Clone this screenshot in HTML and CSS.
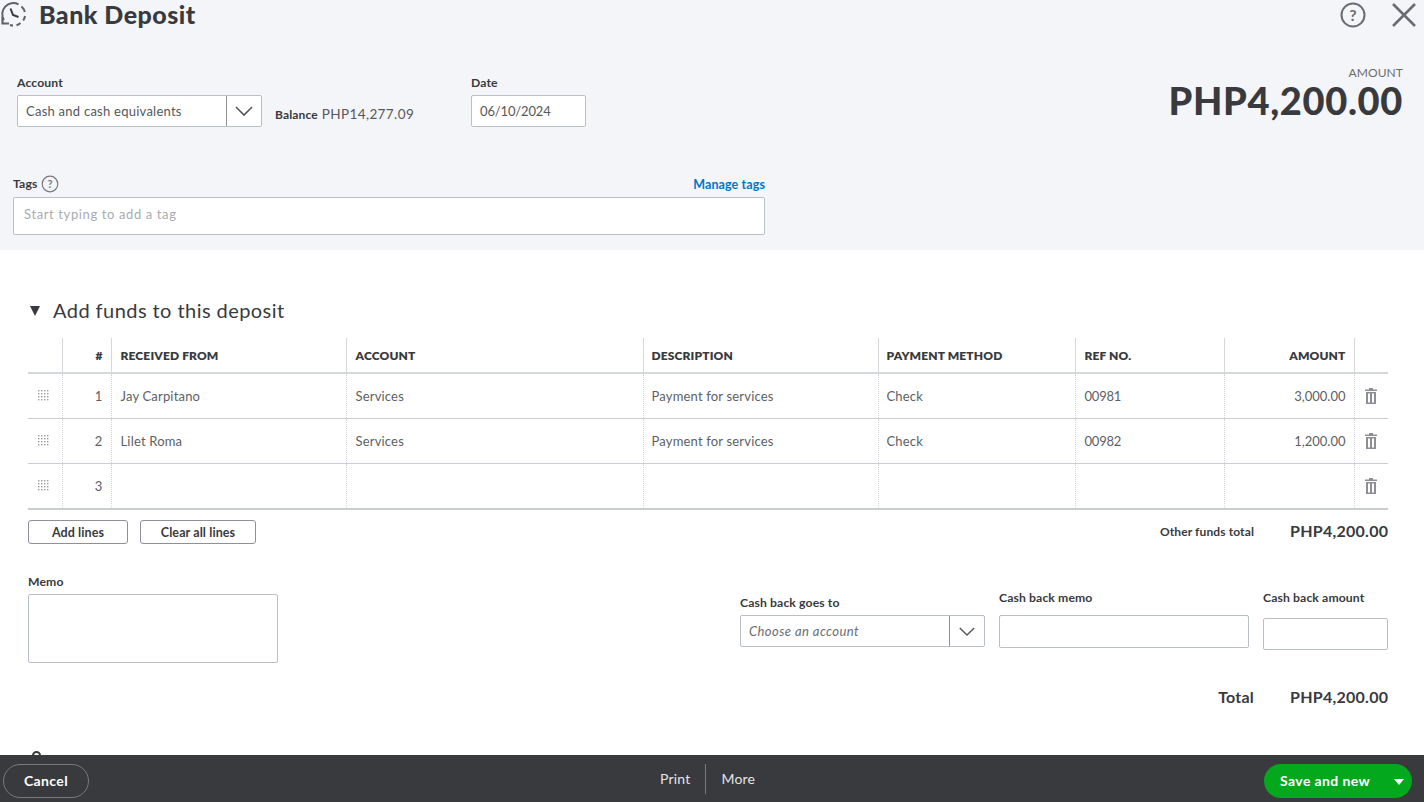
FILE: index.html
```html
<!DOCTYPE html>
<html lang="en">
<head>
<meta charset="utf-8">
<title>Bank Deposit</title>
<link rel="stylesheet" href="styles.css">
</head>
<body>
<div class="page">
  <header class="top">
    <div class="title-row">
      <svg class="history" viewBox="0 0 28 28" width="28" height="28" fill="none" stroke="#5f6268" stroke-width="2">
        <path d="M4 19 A11 11 0 0 1 18.5 3.4"/>
        <path d="M21.5 5.4 A11 11 0 0 1 24.8 11 M25 15 A11 11 0 0 1 23.2 19.5 M20.5 22 A11 11 0 0 1 16.5 24.2 M13 24.6 A11 11 0 0 1 10 24"/>
        <path d="M2.5 16 V22.5 H9" stroke-width="2.2"/>
        <path d="M10.5 7.5 L13 14 L18.5 16" stroke="#393a3d"/>
      </svg>
      <h1 class="title">Bank Deposit</h1>
      <div class="top-icons">
        <svg viewBox="0 0 26 26" width="26" height="26" fill="none" stroke="#6b6c72" stroke-width="2"><circle cx="13" cy="13" r="11.5"/><text x="13" y="18.5" class="q-big">?</text></svg>
        <svg viewBox="0 0 24 24" width="24" height="24" fill="none" stroke="#6b6c72" stroke-width="2.6"><path d="M1 1 L23 23 M23 1 L1 23"/></svg>
      </div>
    </div>
    <div class="fields-row">
      <div class="field">
        <label class="label">Account</label>
        <div class="select account-select">
          <span class="select-text">Cash and cash equivalents</span>
          <span class="select-btn"><svg viewBox="0 0 20 12" width="20" height="12" fill="none" stroke="#55575c" stroke-width="1.6"><path d="M2 2 L10 10 L18 2"/></svg></span>
        </div>
      </div>
      <div class="balance"><b>Balance</b> PHP14,277.09</div>
      <div class="field date-field">
        <label class="label">Date</label>
        <div class="input date-input">06/10/2024</div>
      </div>
      <div class="amount-box">
        <div class="amount-label">AMOUNT</div>
        <div class="amount-value">PHP4,200.00</div>
      </div>
    </div>
    <div class="tags">
      <div class="tags-head">
        <span class="label tags-label">Tags</span>
        <svg viewBox="0 0 18 18" width="18" height="18" fill="none" stroke="#77797e" stroke-width="1.2"><circle cx="9" cy="9" r="7.8"/><text x="9" y="13" class="q-small">?</text></svg>
        <a class="manage">Manage tags</a>
      </div>
      <div class="tags-input">Start typing to add a tag</div>
    </div>
  </header>

  <main class="content">
    <h2 class="section"><span class="caret"></span>Add funds to this deposit</h2>
    <table class="lines">
      <colgroup>
        <col class="c-drag"><col class="c-num"><col class="c-from"><col class="c-acct"><col class="c-desc"><col class="c-pay"><col class="c-ref"><col class="c-amt"><col class="c-del">
      </colgroup>
      <thead>
        <tr><th></th><th class="r">#</th><th>RECEIVED FROM</th><th>ACCOUNT</th><th>DESCRIPTION</th><th>PAYMENT METHOD</th><th>REF NO.</th><th class="r">AMOUNT</th><th></th></tr>
      </thead>
      <tbody>
        <tr>
          <td class="drag"><svg viewBox="0 0 11 11" width="11" height="11"><use href="#grip"/></svg></td>
          <td class="r">1</td><td>Jay Carpitano</td><td>Services</td><td>Payment for services</td><td>Check</td><td class="num">00981</td><td class="r amt">3,000.00</td>
          <td class="del"><svg viewBox="0 0 12 16" width="12" height="16"><use href="#trash"/></svg></td>
        </tr>
        <tr>
          <td class="drag"><svg viewBox="0 0 11 11" width="11" height="11"><use href="#grip"/></svg></td>
          <td class="r">2</td><td>Lilet Roma</td><td>Services</td><td>Payment for services</td><td>Check</td><td class="num">00982</td><td class="r amt">1,200.00</td>
          <td class="del"><svg viewBox="0 0 12 16" width="12" height="16"><use href="#trash"/></svg></td>
        </tr>
        <tr>
          <td class="drag"><svg viewBox="0 0 11 11" width="11" height="11"><use href="#grip"/></svg></td>
          <td class="r">3</td><td></td><td></td><td></td><td></td><td></td><td></td>
          <td class="del"><svg viewBox="0 0 12 16" width="12" height="16"><use href="#trash"/></svg></td>
        </tr>
      </tbody>
    </table>
    <div class="actions">
      <button class="btn btn-add">Add lines</button>
      <button class="btn btn-clear">Clear all lines</button>
      <span class="sub-label">Other funds total</span>
      <span class="sub-value">PHP4,200.00</span>
    </div>
    <div class="lower">
      <div class="memo">
        <label class="label">Memo</label>
        <div class="memo-box"></div>
      </div>
      <div class="cash-goes">
        <label class="label">Cash back goes to</label>
        <div class="select cash-select">
          <span class="select-text placeholder">Choose an account</span>
          <span class="select-btn"><svg viewBox="0 0 20 12" width="18" height="11" fill="none" stroke="#55575c" stroke-width="1.6"><path d="M2 2 L10 10 L18 2"/></svg></span>
        </div>
      </div>
      <div class="cash-memo">
        <label class="label">Cash back memo</label>
        <div class="input cash-memo-input"></div>
      </div>
      <div class="cash-amount">
        <label class="label">Cash back amount</label>
        <div class="input cash-amount-input"></div>
      </div>
    </div>
    <div class="total-row">
      <span class="total-label">Total</span>
      <span class="sub-value">PHP4,200.00</span>
    </div>
    <div class="attach-pin"></div>
  </main>

  <footer class="footer">
    <button class="cancel">Cancel</button>
    <div class="foot-mid">
      <span class="foot-link print">Print</span>
      <span class="foot-link more">More</span>
    </div>
    <button class="save"><span>Save and new</span><i class="save-caret"></i></button>
  </footer>
</div>
<svg class="defs" width="0" height="0">
  <defs>
    <g id="grip" fill="#9a9ca1">
      <rect x="0" y="0" width="1.4" height="1.4"/><rect x="3" y="0" width="1.4" height="1.4"/><rect x="6" y="0" width="1.4" height="1.4"/><rect x="9" y="0" width="1.4" height="1.4"/>
      <rect x="0" y="3" width="1.4" height="1.4"/><rect x="3" y="3" width="1.4" height="1.4"/><rect x="6" y="3" width="1.4" height="1.4"/><rect x="9" y="3" width="1.4" height="1.4"/>
      <rect x="0" y="6" width="1.4" height="1.4"/><rect x="3" y="6" width="1.4" height="1.4"/><rect x="6" y="6" width="1.4" height="1.4"/><rect x="9" y="6" width="1.4" height="1.4"/>
      <rect x="0" y="9" width="1.4" height="1.4"/><rect x="3" y="9" width="1.4" height="1.4"/><rect x="6" y="9" width="1.4" height="1.4"/><rect x="9" y="9" width="1.4" height="1.4"/>
    </g>
    <g id="trash">
      <path fill="#8d8f94" d="M4 0h4v1.4h4v1.6H0V1.4h4z"/>
      <path fill="#8d8f94" fill-rule="evenodd" d="M1 4h10v12H1z M3 5.5v9h2v-9z M7 5.5v9h2v-9z"/>
    </g>
  </defs>
</svg>
</body>
</html>
```
FILE: styles.css
```css
* { box-sizing: border-box; }
html, body { margin: 0; padding: 0; }
body { font-family: "Lato", "Open Sans", sans-serif; color: #393a3d; background: #fff; width: 1424px; height: 802px; overflow: hidden; }
.defs { position: absolute; }
.page { width: 1424px; height: 802px; display: flex; flex-direction: column; overflow: hidden; }

.top { height: 250px; flex: none; background: #f4f5f8; padding: 0 21px 0 13px; display: flex; flex-direction: column; }
.title-row { height: 30px; display: flex; align-items: center; margin-left: -13px; }
.history { flex: none; margin-right: 11px; }
.title { font-size: 25px; font-weight: 900; margin: 0 0 2px; color: #393a3d; letter-spacing: .47px; line-height: 28px; }
.top-icons { margin-left: auto; display: flex; align-items: center; gap: 26px; margin-right: -13px; }
.q-big { font: 700 16px "Lato", sans-serif; fill: #6b6c72; stroke: none; text-anchor: middle; }
.q-small { font: 700 11px "Lato", sans-serif; fill: #77797e; stroke: none; text-anchor: middle; }

.fields-row { display: flex; align-items: flex-start; margin-top: 45px; padding-left: 4px; height: 60px; }
.label { display: block; font-size: 12.2px; line-height: 16px; font-weight: 700; color: #393a3d; letter-spacing: .12px; }
.select { display: flex; background: #fff; border: 1px solid #babec5; border-radius: 2px; }
.select-text { flex: 1; font-size: 13px; letter-spacing: .25px; padding-left: 8px; color: #55575c; line-height: 31px; white-space: nowrap; }
.select-btn { width: 35px; flex: none; border-left: 1px solid #8d9096; display: flex; align-items: center; justify-content: center; }
.account-select { width: 245px; height: 32px; margin-top: 4px; }
.balance { margin: 30px 0 0 13px; width: 196px; font-size: 13.5px; letter-spacing: .4px; line-height: 18px; color: #55575c; }
.balance b { font-size: 12px; color: #393a3d; letter-spacing: .15px; }
.input { background: #fff; border: 1px solid #babec5; border-radius: 2px; }
.date-input { width: 115px; height: 32px; margin-top: 4px; font-size: 13px; letter-spacing: -.15px; line-height: 30px; padding-left: 8px; color: #55575c; }
.amount-box { margin-left: auto; text-align: right; margin-top: -10px; }
.amount-label { font-size: 12px; line-height: 16px; color: #6b6c72; letter-spacing: .1px; margin-bottom: 3px; }
.amount-value { font-size: 38px; font-weight: 900; line-height: 32px; color: #393a3d; letter-spacing: .65px; }

.tags { margin-top: 39px; width: 752px; }
.tags-head { display: flex; align-items: center; height: 20px; gap: 4px; }
.tags-label { font-weight: 700; }
.manage { margin-left: auto; font-size: 12.5px; font-weight: 700; color: #0077c5; letter-spacing: .1px; }
.tags-input { margin-top: 3px; height: 38px; background: #fff; border: 1px solid #babec5; border-radius: 2px; font-size: 13px; letter-spacing: .62px; line-height: 33px; padding-left: 10px; color: #a9abb0; }

.content { flex: 1; min-height: 0; padding: 0 36px 0 28px; overflow: hidden; }
.section { margin: 45px 0 0; height: 30px; display: flex; align-items: center; font-size: 20px; font-weight: 400; letter-spacing: .44px; color: #393a3d; }
.caret { width: 0; height: 0; margin: 2px 13px 0 2px; border-left: 5.5px solid transparent; border-right: 5.5px solid transparent; border-top: 10px solid #393a3d; }

.lines { width: 1360px; table-layout: fixed; border-collapse: collapse; margin-top: 13px; font-size: 13px; }
.c-drag { width: 34px; } .c-num { width: 49px; } .c-from { width: 235px; } .c-acct { width: 297px; }
.c-desc { width: 235px; } .c-pay { width: 197px; } .c-ref { width: 149px; } .c-amt { width: 130px; } .c-del { width: 34px; }
.lines th { height: 35px; font-size: 12px; font-weight: 800; color: #393a3d; text-align: left; letter-spacing: .14px; padding: 0 8px; border-left: 1px solid #d4d7dc; border-bottom: 2px solid #d4d7dc; white-space: nowrap; }
.lines th:first-child, .lines td:first-child { border-left: 0; }
.lines td { height: 45px; padding: 0 8px; color: #5d5f64; letter-spacing: .18px; border-left: 1px dotted #d4d7dc; border-bottom: 1px solid #c9ccd1; white-space: nowrap; }
.lines tbody tr:last-child td { border-bottom: 2px solid #c9ccd1; height: 46px; }
.lines th:nth-child(3), .lines td:nth-child(3), .lines th:nth-child(4), .lines td:nth-child(4), .lines th:nth-child(7), .lines td:nth-child(7) { padding-left: 9px; }
.lines .r { text-align: right; }
.lines .amt { letter-spacing: 0; }
.lines .num { letter-spacing: -.22px; }
.lines .drag, .lines .del { padding: 0; text-align: center; }
.lines .drag svg { margin-left: 10px; }
.lines svg { display: block; margin: auto; }

.actions { display: flex; align-items: center; margin-top: 10px; height: 24px; }
.btn { height: 24px; background: #fff; border: 1px solid #8d9096; border-radius: 3px; font-family: inherit; font-size: 12.5px; font-weight: 700; color: #393a3d; letter-spacing: .1px; padding: 0; }
.btn-add { width: 100px; }
.btn-clear { width: 116px; margin-left: 12px; }
.sub-label { margin-left: auto; font-size: 12px; font-weight: 700; letter-spacing: .12px; margin-bottom: 1px; }
.sub-value { margin-left: 36px; width: 98px; text-align: right; font-size: 16px; font-weight: 700; letter-spacing: .26px; color: #393a3d; white-space: nowrap; line-height: 20px; margin-bottom: 3px; }

.lower { display: flex; align-items: flex-start; margin-top: 30px; height: 107px; }
.memo { width: 250px; }
.memo-box { width: 250px; height: 69px; margin-top: 4px; border: 1px solid #babec5; border-radius: 2px; background: #fff; }
.cash-goes { margin-left: 462px; margin-top: 21px; width: 245px; }
.cash-select { height: 32px; margin-top: 4px; }
.placeholder { font-style: italic; color: #6b6c72; letter-spacing: .43px; }
.cash-memo { margin-left: 14px; margin-top: 16px; width: 250px; }
.cash-memo-input { height: 33px; margin-top: 9px; }
.cash-amount { margin-left: 14px; margin-top: 16px; width: 125px; }
.cash-amount-input { height: 32px; margin-top: 12px; }

.total-row { display: flex; justify-content: flex-end; align-items: center; height: 24px; margin-top: 4px; }
.total-label { font-size: 16px; font-weight: 700; letter-spacing: .2px; margin-bottom: 2px; }
.total-row .sub-value { margin-bottom: 0; }
.attach-pin { width: 9px; height: 9px; margin: 42px 0 0 4px; border: 2px solid #393a3d; border-radius: 50%; }

.footer { height: 47px; flex: none; background: #393a3d; display: flex; align-items: center; position: relative; padding: 0 12px 0 3px; }
.cancel { width: 86px; height: 34px; background: transparent; border: 1px solid #77797e; border-radius: 17px; color: #fff; font-family: inherit; font-size: 14px; font-weight: 700; letter-spacing: .4px; padding: 0; margin-top: 4px; }
.foot-mid { position: absolute; left: 644px; top: 9px; height: 30px; display: flex; align-items: center; }
.foot-link { color: #e3e4e7; font-size: 14px; letter-spacing: .2px; line-height: 30px; padding: 0 16px; }
.foot-link.print { border-right: 1px solid #77797e; padding-right: 15px; }
.foot-link.more { padding-left: 15px; }
.save { margin-left: auto; width: 148px; height: 34px; border: 0; border-radius: 17px; background: #04a81c; color: #fff; font-family: inherit; font-size: 14px; font-weight: 700; letter-spacing: .4px; display: flex; align-items: center; padding: 0 0 0 16px; margin-top: 4px; }
.save-caret { margin-left: auto; margin-right: 8px; margin-top: 3px; width: 0; height: 0; border-left: 5px solid transparent; border-right: 5px solid transparent; border-top: 6px solid #fff; }
```
